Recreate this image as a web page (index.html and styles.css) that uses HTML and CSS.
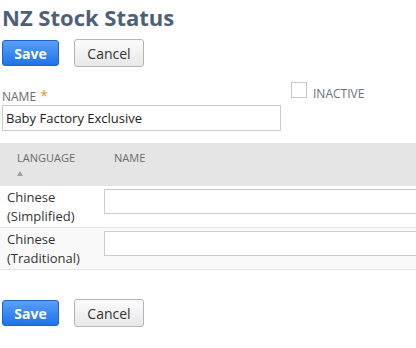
FILE: index.html
```html
<!DOCTYPE html>
<html>
<head>
<meta charset="utf-8">
<link rel="stylesheet" href="styles.css">
</head>
<body>
<h1 class="title">NZ Stock Status</h1>
<div class="actions">
  <button class="btn btn-primary">Save</button>
  <button class="btn btn-secondary">Cancel</button>
</div>
<div class="fields">
  <div class="field field-name">
    <label class="field-label">NAME <span class="req">*</span></label>
    <div class="text-input">Baby Factory Exclusive</div>
  </div>
  <div class="field field-check">
    <span class="checkbox"></span>
    <span class="check-label">INACTIVE</span>
  </div>
</div>
<div class="sublist">
  <div class="sl-head">
    <div class="sl-hcell sl-lang">LANGUAGE<span class="sort"></span></div>
    <div class="sl-hcell sl-name">NAME</div>
  </div>
  <div class="sl-row">
    <div class="sl-cell sl-lang">Chinese<br>(Simplified)</div>
    <div class="sl-cell sl-name"><div class="cell-input"></div></div>
  </div>
  <div class="sl-row sl-row-alt">
    <div class="sl-cell sl-lang">Chinese<br>(Traditional)</div>
    <div class="sl-cell sl-name"><div class="cell-input"></div></div>
  </div>
</div>
<div class="actions actions-bottom">
  <button class="btn btn-primary">Save</button>
  <button class="btn btn-secondary">Cancel</button>
</div>
</body>
</html>
```
FILE: styles.css
```css
html, body {
  margin: 0;
  padding: 0;
  background: #fff;
  overflow: hidden;
}
body {
  width: 416px;
  height: 348px;
  font-family: "Open Sans", "Liberation Sans", sans-serif;
  color: #333;
}
.title {
  margin: 0;
  padding: 3px 0 0 2px;
  font-size: 22px;
  line-height: 29px;
  font-weight: 700;
  color: #4d5f79;
  height: 32px;
  box-sizing: border-box;
}
.actions {
  display: flex;
  align-items: center;
  gap: 15px;
  padding-left: 2px;
  margin-top: 7px;
  height: 28px;
}
.btn {
  font-family: "Open Sans", "Liberation Sans", sans-serif;
  font-size: 14px;
  border-radius: 3px;
  padding: 0;
  box-sizing: border-box;
  cursor: pointer;
}
.btn-primary {
  width: 57px;
  height: 26px;
  font-weight: 700;
  color: #fff;
  background: linear-gradient(#5a9ff8, #1f72e8);
  border: 1px solid #1e63c9;
}
.btn-secondary {
  width: 70px;
  height: 28px;
  color: #333;
  background: linear-gradient(#fbfbfb, #e8e8e8);
  border: 1px solid #b5b5b5;
}
.fields {
  display: flex;
  align-items: flex-start;
  margin-top: 15px;
}
.field-name {
  margin-left: 2px;
  padding-top: 6px;
  width: 279px;
}
.field-label {
  display: block;
  font-size: 12px;
  line-height: 16px;
  color: #6b6b6b;
}
.req {
  color: #e09b2d;
  font-size: 14px;
  margin-left: 1px;
}
.text-input {
  height: 26px;
  border: 1px solid #ccc;
  box-sizing: border-box;
  font-size: 13px;
  line-height: 24px;
  padding-left: 3px;
  color: #222;
}
.field-check {
  display: flex;
  margin-left: 10px;
}
.checkbox {
  width: 16px;
  height: 16px;
  box-sizing: border-box;
  border: 1px solid #c8c8c8;
  background: #fff;
}
.check-label {
  margin-left: 6px;
  margin-top: 4px;
  font-size: 12px;
  line-height: 16px;
  color: #6b7180;
}
.sublist {
  margin-top: 12px;
  width: 416px;
}
.sl-head {
  display: grid;
  grid-template-columns: 104px 1fr;
  height: 43px;
  background: #e5e5e5;
}
.sl-hcell {
  font-size: 11px;
  color: #6b6b6b;
  padding-top: 7px;
  line-height: 15px;
}
.sl-hcell.sl-lang {
  padding-left: 17px;
}
.sl-hcell.sl-name {
  padding-left: 10px;
}
.sort {
  display: block;
  width: 0;
  height: 0;
  margin: 6px 0 0 0;
  border-left: 3px solid transparent;
  border-right: 3px solid transparent;
  border-bottom: 5px solid #a0a0a0;
}
.sl-row {
  display: grid;
  grid-template-columns: 104px 1fr;
  height: 42px;
  box-sizing: border-box;
  border-bottom: 1px solid #e6e6e6;
  background: #fff;
}
.sl-row-alt {
  background: #f9f9f9;
}
.sl-cell.sl-lang {
  padding: 2px 0 0 7px;
  font-size: 13px;
  line-height: 19px;
  color: #333;
}
.cell-input {
  margin-top: 3px;
  height: 25px;
  border: 1px solid #ccc;
  border-right: none;
  box-sizing: border-box;
  background: #fff;
}
.actions-bottom {
  margin-top: 29px;
}
```
